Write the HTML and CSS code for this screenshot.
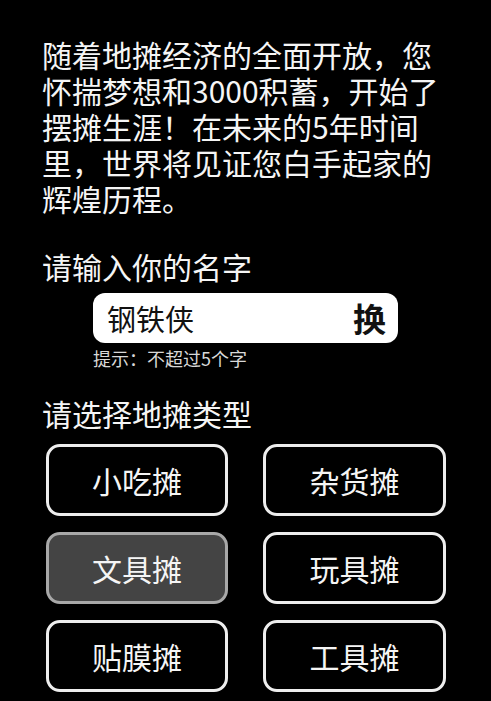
FILE: index.html
```html
<!DOCTYPE html>
<html lang="zh-CN">
<head>
<meta charset="utf-8">
<link rel="stylesheet" href="styles.css">
</head>
<body>
<main class="page">
  <p class="intro">随着地摊经济的全面开放，您怀揣梦想和3000积蓄，开始了摆摊生涯！在未来的5年时间里，世界将见证您白手起家的辉煌历程。</p>
  <div class="label label-name">请输入你的名字</div>
  <div class="name-box">
    <span class="name">钢铁侠</span>
    <span class="swap">换</span>
  </div>
  <div class="hint">提示：不超过5个字</div>
  <div class="label label-type">请选择地摊类型</div>
  <div class="grid">
    <div class="stall">小吃摊</div>
    <div class="stall">杂货摊</div>
    <div class="stall active">文具摊</div>
    <div class="stall">玩具摊</div>
    <div class="stall">贴膜摊</div>
    <div class="stall">工具摊</div>
  </div>
</main>
</body>
</html>
```
FILE: styles.css
```css
html, body {
  margin: 0;
  padding: 0;
  background: #000;
}
body {
  font-family: "Noto Sans CJK SC", "Noto Sans", sans-serif;
  color: #f5f5f5;
  width: 491px;
  height: 701px;
  overflow: hidden;
}
.page {
  padding: 36px 42px 0 42px;
}
.intro {
  margin: 0;
  font-size: 30px;
  line-height: 36px;
  width: 407px;
}
.label {
  font-size: 30px;
  line-height: 36px;
}
.label-name {
  margin-top: 32px;
}
.name-box {
  margin: 9px 0 0 51px;
  width: 305px;
  height: 50px;
  box-sizing: border-box;
  background: #fff;
  border-radius: 12px;
  display: flex;
  align-items: center;
  justify-content: space-between;
  padding: 0 12px 0 14px;
  color: #111;
}
.name {
  font-size: 29px;
  line-height: 50px;
}
.swap {
  font-size: 33px;
  font-weight: 700;
  line-height: 50px;
}
.hint {
  margin: 3px 0 0 51px;
  font-size: 18px;
  line-height: 24px;
  color: #d8d8d8;
}
.label-type {
  margin-top: 25px;
}
.grid {
  margin: 13px 0 0 4px;
  display: grid;
  grid-template-columns: 182px 183px;
  grid-auto-rows: 72px;
  column-gap: 35px;
  row-gap: 16px;
}
.stall {
  box-sizing: border-box;
  border: 3px solid #eee;
  border-radius: 14px;
  display: flex;
  align-items: center;
  justify-content: center;
  font-size: 30px;
  color: #f5f5f5;
}
.stall.active {
  background: #444;
  border: 3px solid #a8a8a8;
}
```
